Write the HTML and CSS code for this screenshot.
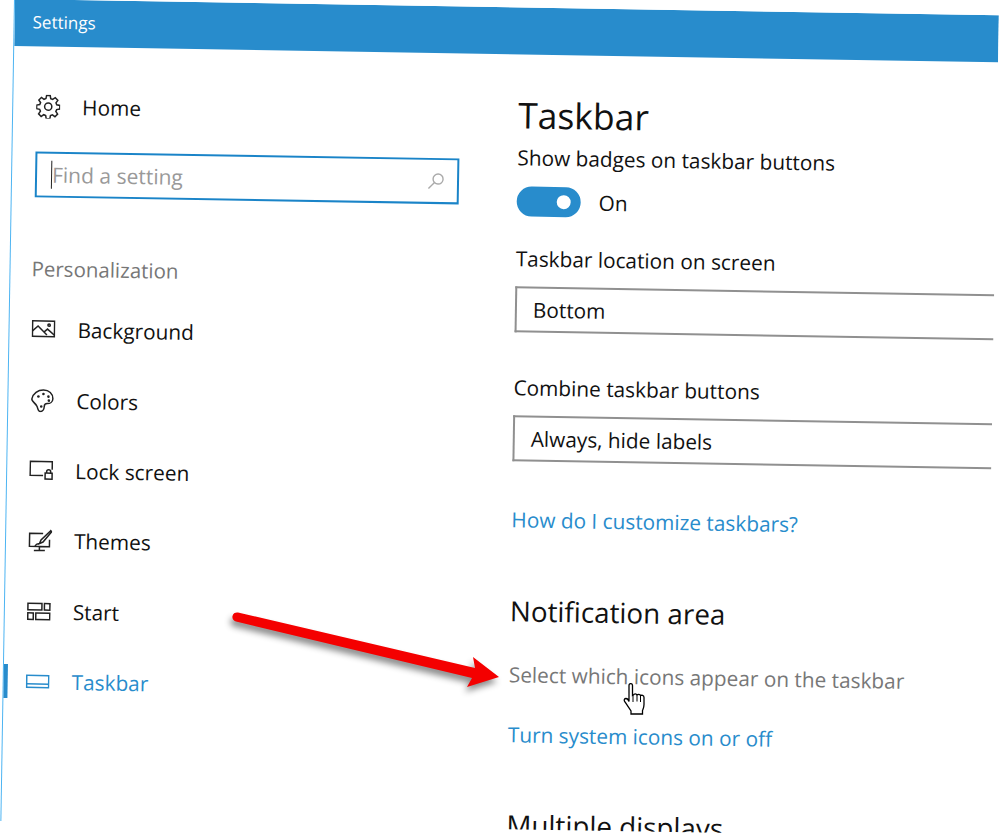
FILE: index.html
```html
<!DOCTYPE html>
<html>
<head>
  <title>Settings</title>
  <link rel="stylesheet" href="styles.css">
</head>
<body>
  <div class="window">
    <div class="titlebar">Settings</div>
    <div class="main">
      <div class="sidebar">
        <div class="home">
          <svg class="icon" viewBox="0 0 24 24"><path d="M10.200 1.500h3.600l.6 3.100 1.900.8 2.600-1.800 2.600 2.600-1.800 2.600.8 1.900 3.100.6v3.600l-3.100.6-.8 1.900 1.800 2.600-2.600 2.600-2.600-1.800-1.900.8-.6 3.100h-3.600l-.6-3.100-1.900-.8-2.600 1.800-2.600-2.600 1.800-2.600-.8-1.900-3.100-.6v-3.600l3.100-.6.8-1.900-1.800-2.600 2.600-2.600 2.600 1.800 1.900-.8z" transform="translate(0 -.6)"/><circle cx="12" cy="12" r="3.600"/></svg>
          <span>Home</span>
        </div>
        <div class="search">
          <span class="caret"></span>
          <span class="placeholder">Find a setting</span>
          <svg class="search-icon" viewBox="0 0 18 18"><circle cx="11" cy="7" r="5"/><path d="M7.500 10.500L1.500 16.500"/></svg>
        </div>
        <div class="group-label">Personalization</div>
        <ul class="nav">
          <li>
            <svg class="icon" viewBox="0 0 24 20"><rect x="1" y="1.500" width="22" height="15.500"/><path d="M1 11.500l5.500-5 9 9M13 12l3-2.500 7 6"/><circle cx="17.500" cy="5.500" r="1.200"/></svg>
            <span>Background</span>
          </li>
          <li>
            <svg class="icon" viewBox="0 0 24 24"><path d="M13 1.500c5.500 0 9.500 3.500 9.500 8.500 0 3.500-3 5-5.500 5-2 0-3 1-3 3 0 3-2 5-4 5-2.500 0-2-3-3.500-5.500C5.200 15 1 12.500 1.500 10.500 2.500 5 7.500 1.500 13 1.500z"/><circle class="dot" cx="8" cy="8" r="1.300"/><circle class="dot" cx="13" cy="5.500" r="1.300"/><circle class="dot" cx="18" cy="8" r="1.300"/><circle class="dot" cx="18.500" cy="12" r="1.300"/><circle class="dot" cx="11" cy="18" r="1.300"/></svg>
            <span>Colors</span>
          </li>
          <li>
            <svg class="icon" viewBox="0 0 24 20"><path d="M14 15H1V1h22v8"/><rect x="16" y="12.500" width="7" height="6"/><path d="M17.500 12.500v-1.500a2 2 0 0 1 4 0v1.500"/></svg>
            <span>Lock screen</span>
          </li>
          <li>
            <svg class="icon" viewBox="0 0 24 22"><path d="M15 4H1.500v13h20V10M11.500 17v3.500M6 21h11"/><path d="M22.500 1L13 10.500l-1.500 3.500 3.500-1.500L23.500 2zM11.500 14c-2 0-3.500 1-4.500 2.500"/></svg>
            <span>Themes</span>
          </li>
          <li>
            <svg class="icon" viewBox="0 0 24 18"><rect x="1" y="1" width="14" height="6.500"/><rect x="17.500" y="1" width="5.500" height="6.500"/><rect x="1" y="10.500" width="5.500" height="6.500"/><rect x="9" y="10.500" width="14" height="6.500"/></svg>
            <span>Start</span>
          </li>
          <li class="active">
            <svg class="icon" viewBox="0 0 24 14"><rect x="1" y="1" width="22" height="12"/><path d="M1 9.500h22"/></svg>
            <span>Taskbar</span>
          </li>
        </ul>
      </div>
      <div class="content">
        <h1>Taskbar</h1>
        <div class="label">Show badges on taskbar buttons</div>
        <div class="toggle-row">
          <span class="toggle"><span class="knob"></span></span>
          <span>On</span>
        </div>
        <div class="label label-location">Taskbar location on screen</div>
        <div class="select">Bottom</div>
        <div class="label label-combine">Combine taskbar buttons</div>
        <div class="select">Always, hide labels</div>
        <a class="link link-help">How do I customize taskbars?</a>
        <h2>Notification area</h2>
        <a class="link-muted">Select which icons appear on the taskbar</a>
        <a class="link link-system">Turn system icons on or off</a>
        <h2 class="clipped">Multiple displays</h2>
      </div>
    </div>
  </div>

  <svg class="arrow" viewBox="0 0 280 84"><path d="M6 2.500L243 58l-2-11 26 20-32 10 5-9L4 11.500a4.600 4.600 0 0 1 2-9z" fill="#f40000"/></svg>

  <svg class="hand" viewBox="0 0 26 34"><path d="M7 2.500c0-2.500 3.500-2.500 3.500 0v10l1-.5c.5-1.500 3-1.500 3.500 0 .8-1 3-1 3.500.5 1-.5 3.500-.3 3.500 2v7c0 3-1 4.500-1.500 6v3.500H9v-3L3 19c-1.500-2-.5-3.500 1-3.500 1 0 2.500 1.500 3 3z" fill="#fff" stroke="#000" stroke-width="1.300"/><path d="M11 13v6M15 12.500v6M18.500 13v6" fill="none" stroke="#000" stroke-width="1"/></svg>
</body>
</html>
```

FILE: styles.css
```css
html, body {
  margin: 0;
  height: 100%;
  background-color: #fff;
  overflow: hidden;
}

body {
  font-family: "Open Sans", "Noto Sans", sans-serif;
  font-size: 20.8px;
  color: #111;
}

/* the whole capture is tilted about a degree */
.window {
  width: 985px;
  height: 822px;
  margin: -1px 0 0 14px;
  border-left: 1px solid #4db4f2;
  box-sizing: border-box;
  overflow: hidden;
  transform: rotate(0.95deg);
  transform-origin: 0 0;
}

.titlebar {
  height: 47px;
  padding-left: 18px;
  line-height: 46px;
  font-size: 17px;
  background-color: #288ccc;
  color: #fff;
}

.main {
  display: flex;
}

.sidebar {
  width: 505px;
  flex: none;
}

.icon {
  width: 24px;
  height: 24px;
  flex: none;
  fill: none;
  stroke: #222;
  stroke-width: 1.5;
}

.icon .dot {
  fill: #222;
  stroke: none;
}

.home {
  display: flex;
  align-items: center;
  gap: 22px;
  height: 32px;
  margin-top: 44px;
  padding-left: 23px;
}

.search {
  display: flex;
  align-items: center;
  width: 424px;
  height: 46px;
  margin: 29px 0 0 23px;
  padding: 0 12px 0 14px;
  box-sizing: border-box;
  border: 2px solid #1a84c8;
  font-size: 21px;
  color: #999;
}

.caret {
  width: 1px;
  height: 28px;
  background-color: #222;
}

.placeholder {
  flex: 1;
}

.search-icon {
  width: 18px;
  height: 18px;
  fill: none;
  stroke: #aaa;
  stroke-width: 1.4;
}

.group-label {
  margin: 56px 0 0 21px;
  line-height: 30px;
  font-size: 20.5px;
  color: #777;
}

.nav {
  list-style: none;
  margin: 11px 0 0;
  padding: 0;
}

.nav li {
  display: flex;
  align-items: center;
  gap: 22px;
  height: 70.4px;
  padding-left: 22px;
  position: relative;
}

.nav .active {
  color: #288ccc;
}

.nav .active .icon {
  stroke: #288ccc;
}

.nav .active::before {
  content: "";
  position: absolute;
  left: -2px;
  top: 18px;
  width: 6px;
  height: 34px;
  background-color: #288ccc;
}

.content {
  flex: 1;
  min-width: 0;
}

h1 {
  margin: 32px 0 0;
  line-height: 56px;
  font-size: 35.5px;
  font-weight: 400;
}

.label {
  line-height: 30px;
}

.toggle-row {
  display: flex;
  align-items: center;
  gap: 18px;
  margin-top: 14px;
}

.toggle {
  display: flex;
  align-items: center;
  justify-content: flex-end;
  width: 64px;
  height: 30px;
  padding-right: 10px;
  box-sizing: border-box;
  border-radius: 15px;
  background-color: #288ccc;
}

.knob {
  width: 14px;
  height: 14px;
  border-radius: 50%;
  background-color: #fff;
}

.label-location {
  margin-top: 27px;
}

.label-combine {
  margin-top: 40px;
}

.select {
  height: 46px;
  margin-top: 13px;
  padding-left: 16px;
  line-height: 42px;
  box-sizing: border-box;
  border: 2px solid #909090;
  border-right: 0;
}

.link, .link-muted {
  display: block;
  line-height: 30px;
}

.link {
  color: #288ccc;
}

.link-help {
  margin-top: 43px;
}

h2 {
  margin: 58px 0 0;
  line-height: 36px;
  font-size: 27.8px;
  font-weight: 400;
}

.link-muted {
  margin-top: 31px;
  color: #777;
}

.link-system {
  margin-top: 30px;
}

.clipped {
  margin-top: 57px;
}

.arrow {
  position: absolute;
  left: 232px;
  top: 610px;
  width: 280px;
  height: 84px;
  filter: drop-shadow(-2px 5px 3px rgba(0, 0, 0, 0.45));
}

.hand {
  position: absolute;
  left: 622px;
  top: 683px;
  width: 26px;
  height: 34px;
}
```
